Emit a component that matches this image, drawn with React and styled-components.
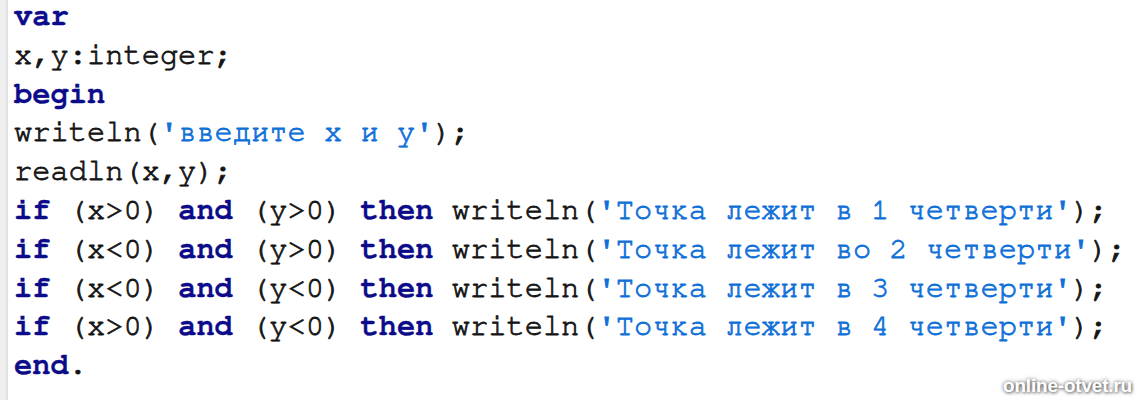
import React from 'react';
import styled, { createGlobalStyle } from 'styled-components';

const GlobalStyle = createGlobalStyle`
  html, body {
    margin: 0;
    padding: 0;
    background: #ffffff;
  }
`

const Editor = styled.div`
  position: relative;
  display: flex;
  width: 1138px;
  height: 400px;
  overflow: hidden;
  background: #ffffff;
`

const Gutter = styled.div`
  width: 6px;
  flex-shrink: 0;
  background-color: #efefef;
  border-right: 2px solid #e2e2e2;
`

const Code = styled.pre`
  margin: 0;
  padding: 0 0 0 6px;
  margin-top: -3px;
  font-family: "Nimbus Mono PS", "FreeMono", "Courier New", "Liberation Mono", monospace;
  font-size: 30.4px;
  line-height: 38.8px;
  color: #111111;
  white-space: pre;
`

const Line = styled.div`
  height: 38.8px;
`

const colors = {
  kw: '#0c0c8a',
  str: '#0f70d8',
  plain: '#141414',
}

const Token = styled.span`
  color: ${p => colors[p.$kind]};
  font-weight: ${p => (p.$kind === 'kw' ? 700 : 400)};
  -webkit-text-stroke: ${p => (p.$kind === 'kw' ? '0.3px' : '0.8px')} currentColor;
`

const Watermark = styled.div`
  position: absolute;
  right: 6px;
  bottom: 3px;
  font-family: "Liberation Sans", Arial, sans-serif;
  font-weight: 700;
  font-size: 19px;
  letter-spacing: -0.2px;
  color: #ffffff;
  text-shadow: 0 0 4px rgba(0, 0, 0, 0.6), 1px 1px 3px rgba(0, 0, 0, 0.4);
`

const cond = (a, b) => [
  ['kw', 'if'], ['plain', ` (x${a}0) `], ['kw', 'and'], ['plain', ` (y${b}0) `],
  ['kw', 'then'], ['plain', ' writeln('],
]

const lines = [
  [['kw', 'var']],
  [['plain', 'x,y:integer;']],
  [['kw', 'begin']],
  [['plain', 'writeln('], ['str', "'введите x и y'"], ['plain', ');']],
  [['plain', 'readln(x,y);']],
  [...cond('>', '>'), ['str', "'Точка лежит в 1 четверти'"], ['plain', ');']],
  [...cond('<', '>'), ['str', "'Точка лежит во 2 четверти'"], ['plain', ');']],
  [...cond('<', '<'), ['str', "'Точка лежит в 3 четверти'"], ['plain', ');']],
  [...cond('>', '<'), ['str', "'Точка лежит в 4 четверти'"], ['plain', ');']],
  [['kw', 'end'], ['plain', '.']],
]

const App = () => {
  return (
    <Editor>
      <GlobalStyle />
      <Gutter />
      <Code>
        {lines.map((line, i) => (
          <Line key={i}>
            {line.map(([kind, text], j) => (
              <Token key={j} $kind={kind}>{text}</Token>
            ))}
          </Line>
        ))}
      </Code>
      <Watermark>online-otvet.ru</Watermark>
    </Editor>
  );
}

export default App;
